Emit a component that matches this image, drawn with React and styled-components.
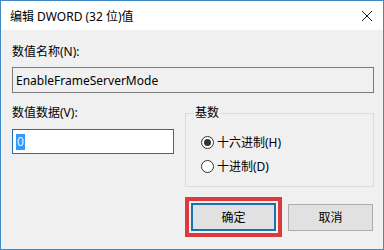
import React from 'react';
import styled, { createGlobalStyle } from 'styled-components';

const Global = createGlobalStyle`
    html, body {
        margin: 0;
        padding: 0;
        background: #f0f0f0;
    }
    body {
        font-family: "Noto Sans", "Noto Sans CJK SC", sans-serif;
        font-size: 12px;
        color: #000;
    }
`;

const Window = styled.div`
    box-sizing: border-box;
    width: 384px;
    height: 250px;
    border: 1px solid #3f89c7;
    background: #f0f0f0;
    display: flex;
    flex-direction: column;
`;

const TitleBar = styled.div`
    height: 29px;
    background: #fff;
    display: flex;
    align-items: center;
    justify-content: space-between;
    padding: 0 9px 0 9px;
    font-size: 12px;
`;

const Close = styled.div`
    width: 12px;
    height: 12px;
    display: flex;
    margin-right: 1px;
`;

const Body = styled.div`
    padding: 14px 9px 0 11px;
    display: flex;
    flex-direction: column;
`;

const Label = styled.div`
    line-height: 16px;
    height: 16px;
`;

const TextBox = styled.div`
    box-sizing: border-box;
    height: ${p => p.$h}px;
    border: 1px solid ${p => (p.$focus ? '#1e6fb0' : '#7a7a7a')};
    background: ${p => (p.$focus ? '#fff' : '#f0f0f0')};
    margin-top: ${p => p.$mt}px;
    display: flex;
    align-items: center;
    padding-left: 3px;
`;

const Selected = styled.span`
    background: #3399ff;
    color: #eaf4ff;
    line-height: 16px;
    padding: 0 1px;
    font-size: 12px;
`;

const Row = styled.div`
    display: flex;
    margin-top: 12px;
    gap: 11px;
`;

const Column = styled.div`
    width: 162px;
    display: flex;
    flex-direction: column;
`;

const Group = styled.fieldset`
    flex: 1;
    margin: 0;
    height: 82px;
    box-sizing: border-box;
    border: 1px solid #dcdcdc;
    padding: 13px 0 0 0;
    display: flex;
    flex-direction: column;
    gap: 8px;
`;

const Legend = styled.legend`
    padding: 0 1px;
    margin-left: 8px;
    line-height: 16px;
`;

const Option = styled.label`
    display: flex;
    align-items: center;
    gap: 3px;
    height: 16px;
    margin-left: 15px;
`;

const Radio = styled.span`
    box-sizing: border-box;
    width: 13px;
    height: 13px;
    border-radius: 50%;
    border: 1px solid #333;
    background: #fff;
    display: flex;
    align-items: center;
    justify-content: center;
    &::after {
        content: '';
        width: 7px;
        height: 7px;
        border-radius: 50%;
        background: ${p => (p.$on ? '#333' : 'transparent')};
    }
`;

const Buttons = styled.div`
    display: flex;
    justify-content: flex-end;
    align-items: center;
    gap: 6px;
    margin-top: 10px;
    padding-right: 1px;
`;

const Highlight = styled.div`
    border: 4px solid #db3b3f;
    padding: 2px;
    display: flex;
`;

const Button = styled.div`
    box-sizing: border-box;
    width: 85px;
    height: ${p => (p.$primary ? 28 : 27)}px;
    background: #e1e1e1;
    border: ${p => (p.$primary ? '2px solid #1e6fb0' : '1px solid #adadad')};
    display: flex;
    align-items: center;
    justify-content: center;
`;

const App = () => {
    return (
        <>
            <Global />
            <Window>
                <TitleBar>
                    <span>编辑 DWORD (32 位)值</span>
                    <Close>
                        <svg width="12" height="12" viewBox="0 0 12 12">
                            <path d="M1 1L11 11M11 1L1 11" stroke="#222" strokeWidth="1" fill="none" />
                        </svg>
                    </Close>
                </TitleBar>
                <Body>
                    <Label>数值名称(N):</Label>
                    <TextBox $h={26} $mt={7}>EnableFrameServerMode</TextBox>
                    <Row>
                        <Column>
                            <Label>数值数据(V):</Label>
                            <TextBox $h={25} $mt={8} $focus>
                                <Selected>0</Selected>
                            </TextBox>
                        </Column>
                        <Group>
                            <Legend>基数</Legend>
                            <Option><Radio $on />十六进制(H)</Option>
                            <Option><Radio />十进制(D)</Option>
                        </Group>
                    </Row>
                    <Buttons>
                        <Highlight>
                            <Button $primary>确定</Button>
                        </Highlight>
                        <Button>取消</Button>
                    </Buttons>
                </Body>
            </Window>
        </>
    );
};

export default App;
